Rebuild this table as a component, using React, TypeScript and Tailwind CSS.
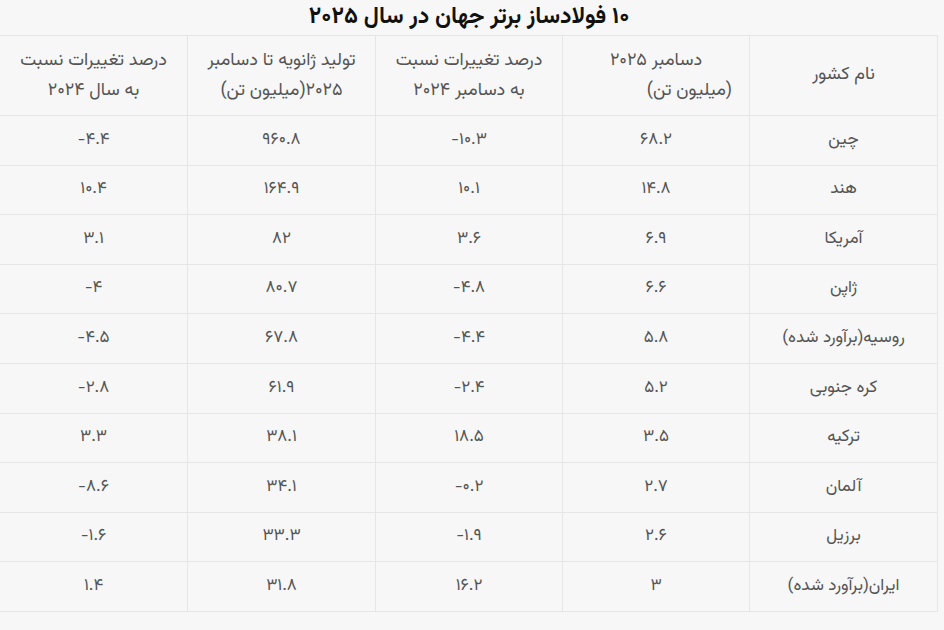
import React from "react";

const rows: [string, string, string, string, string][] = [
  ["چین", "۶۸.۲", "-۱۰.۳", "۹۶۰.۸", "-۴.۴"],
  ["هند", "۱۴.۸", "۱۰.۱", "۱۶۴.۹", "۱۰.۴"],
  ["آمریکا", "۶.۹", "۳.۶", "۸۲", "۳.۱"],
  ["ژاپن", "۶.۶", "-۴.۸", "۸۰.۷", "-۴"],
  ["روسیه(برآورد شده)", "۵.۸", "-۴.۴", "۶۷.۸", "-۴.۵"],
  ["کره جنوبی", "۵.۲", "-۲.۴", "۶۱.۹", "-۲.۸"],
  ["ترکیه", "۳.۵", "۱۸.۵", "۳۸.۱", "۳.۳"],
  ["آلمان", "۲.۷", "-۰.۲", "۳۴.۱", "-۸.۶"],
  ["برزیل", "۲.۶", "-۱.۹", "۳۳.۳", "-۱.۶"],
  ["ایران(برآورد شده)", "۳", "۱۶.۲", "۳۱.۸", "۱.۴"],
];

export default function App() {
  return (
    <div
      dir="rtl"
      className="w-[944px] h-[630px] bg-[#f7f7f7] overflow-hidden"
      style={{ fontFamily: 'Vazirmatn, "DejaVu Sans", sans-serif' }}
    >
      <div className="h-[35px] flex items-center justify-center text-[23px] font-bold text-[#111] leading-none pr-[6px]">
        ۱۰ فولادساز برتر جهان در سال ۲۰۲۵
      </div>
      <div className="pr-[6px]">
        <table className="w-[938px] border-collapse table-fixed text-[17px] text-[#555]">
          <colgroup>
            <col className="w-[188px]" />
            <col className="w-[187px]" />
            <col className="w-[187px]" />
            <col className="w-[188px]" />
            <col className="w-[188px]" />
          </colgroup>
          <thead>
            <tr className="h-[80px] text-[18px]">
              <th className="border border-[#e6e6e6] font-normal text-center">نام کشور</th>
              <th className="border border-[#e6e6e6] font-normal text-center leading-[30px]">
                <div>دسامبر ۲۰۲۵</div>
                <div className="pr-[17px] text-right">(میلیون تن)</div>
              </th>
              <th className="border border-[#e6e6e6] font-normal text-center leading-[30px]">
                <div>درصد تغییرات نسبت</div>
                <div>به دسامبر ۲۰۲۴</div>
              </th>
              <th className="border border-[#e6e6e6] font-normal text-center leading-[30px]">
                <div>تولید ژانویه تا دسامبر</div>
                <div>۲۰۲۵(میلیون تن)</div>
              </th>
              <th className="border border-[#e6e6e6] font-normal text-center leading-[30px]">
                <div>درصد تغییرات نسبت</div>
                <div>به سال ۲۰۲۴</div>
              </th>
            </tr>
          </thead>
          <tbody>
            {rows.map((r, i) => (
              <tr key={i} className="h-[49.6px]">
                <td className="border border-[#e6e6e6] text-center">{r[0]}</td>
                {r.slice(1).map((v, j) => (
                  <td key={j} className="border border-[#e6e6e6] text-center">
                    <bdo dir="ltr">{v}</bdo>
                  </td>
                ))}
              </tr>
            ))}
          </tbody>
        </table>
      </div>
    </div>
  );
}
